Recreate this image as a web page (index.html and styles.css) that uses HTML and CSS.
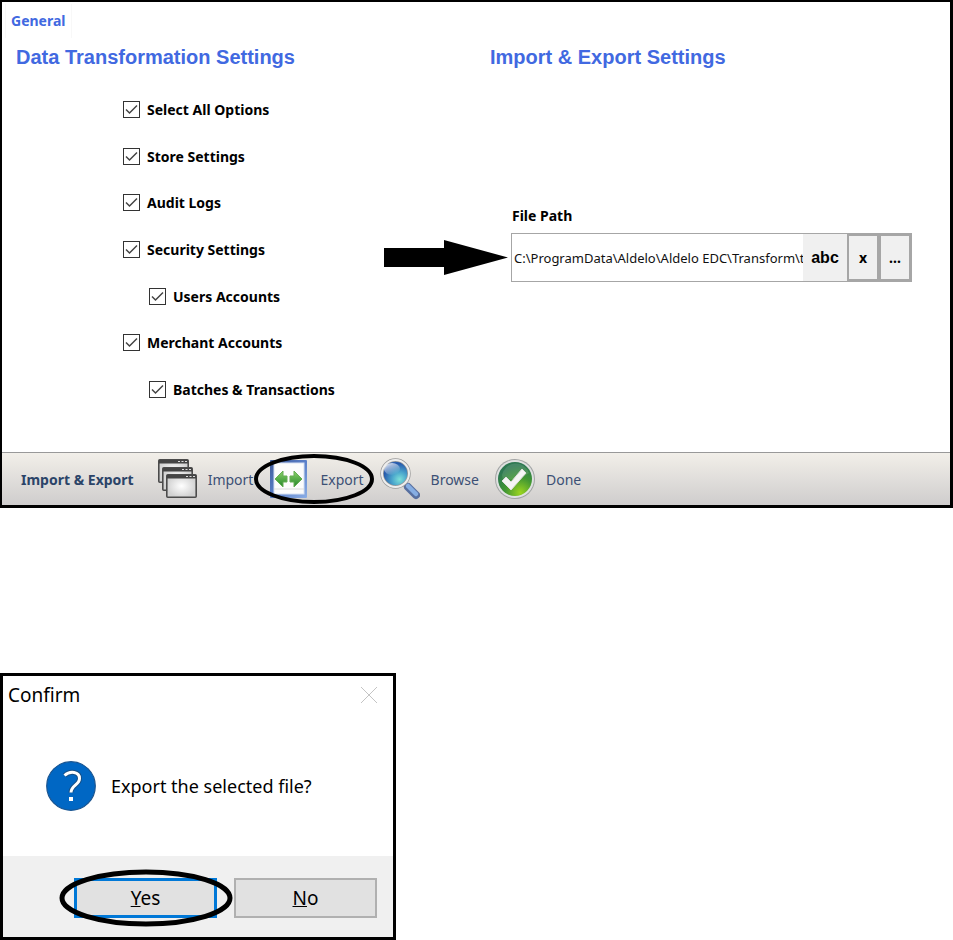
FILE: index.html
```html
<!DOCTYPE html>
<html lang="en">
<head>
<meta charset="utf-8">
<title>Import &amp; Export</title>
<link rel="stylesheet" href="styles.css">
</head>
<body>
<main class="window">
  <nav class="tabs"><a class="tab" href="#general">General</a></nav>
  <div class="panels" id="general">
    <section class="panel">
      <h2 class="heading">Data Transformation Settings</h2>
      <div class="options">
        <label class="option"><input type="checkbox" checked>Select All Options</label>
        <label class="option"><input type="checkbox" checked>Store Settings</label>
        <label class="option"><input type="checkbox" checked>Audit Logs</label>
        <label class="option"><input type="checkbox" checked>Security Settings</label>
        <label class="option nested"><input type="checkbox" checked>Users Accounts</label>
        <label class="option"><input type="checkbox" checked>Merchant Accounts</label>
        <label class="option nested"><input type="checkbox" checked>Batches &amp; Transactions</label>
      </div>
    </section>
    <section class="panel">
      <h2 class="heading">Import &amp; Export Settings</h2>
      <div class="path">
        <label class="path-label" for="file-path">File Path</label>
        <div class="path-box">
          <input class="path-input" id="file-path" type="text" value="C:\ProgramData\Aldelo\Aldelo EDC\Transform\template.xml">
          <button class="path-button keyboard" type="button">abc</button>
          <button class="path-button framed" type="button">x</button>
          <button class="path-button framed" type="button">...</button>
          <svg class="arrow" viewBox="0 0 124 36" aria-hidden="true"><path d="M0 8H60V0L124 17.500L60 35V27H0Z"/></svg>
        </div>
      </div>
    </section>
  </div>
  <footer class="toolbar">
    <strong class="toolbar-title">Import &amp; Export</strong>
    <button class="tool" type="button">
      <svg class="tool-icon" viewBox="0 0 40 42" aria-hidden="true">
        <defs>
          <radialGradient id="pane"><stop offset="0" stop-color="#fff"/><stop offset="1" stop-color="#d2d2d2"/></radialGradient>
          <g id="win"><rect x=".8" y=".8" width="29.400" height="22.400" rx="1" fill="url(#pane)" stroke="#4b4b4b" stroke-width="1.600"/><path d="M1 1H30V4.500H1Z" fill="#444"/><path d="M20 2.500h2m1.500 0h2m1.500 0h2" stroke="#ddd" stroke-width="1.200"/></g>
        </defs>
        <use href="#win" x="1" y="1"/><use href="#win" x="5" y="9"/><use href="#win" x="9" y="16"/>
      </svg>
      <span>Import</span>
    </button>
    <button class="tool circled" type="button">
      <svg class="tool-icon" viewBox="0 0 40 42" aria-hidden="true">
        <defs>
          <linearGradient id="frame" x2="1" y2="1"><stop offset="0" stop-color="#3d5998"/><stop offset=".5" stop-color="#5b80c9"/><stop offset="1" stop-color="#8caee5"/></linearGradient>
          <linearGradient id="leaf" x2="0" y2="1"><stop offset="0" stop-color="#8bd269"/><stop offset="1" stop-color="#24852a"/></linearGradient>
        </defs>
        <rect x="1" y="2" width="37" height="38" rx="1" fill="url(#frame)"/>
        <rect x="5" y="5" width="30" height="31" fill="#fcfcfc" stroke="#d6e0f2"/>
        <path d="M5 31H35" stroke="#dcdcdc"/>
        <path d="M6 21L14 13V18H18V24H14V29ZM33 21L25 13V18H21V24H25V29Z" fill="url(#leaf)" stroke="#64ad52"/>
      </svg>
      <span>Export</span>
      <svg class="ring ring-tool" viewBox="0 0 120 50" preserveAspectRatio="none" aria-hidden="true"><ellipse cx="60" cy="25" rx="58" ry="23"/></svg>
    </button>
    <button class="tool" type="button">
      <svg class="tool-icon" viewBox="0 0 40 42" aria-hidden="true">
        <defs>
          <radialGradient id="lens" cx=".65" cy=".72" r=".8"><stop offset="0" stop-color="#7ce0d8"/><stop offset=".35" stop-color="#4aa5cc"/><stop offset=".75" stop-color="#2659ac"/><stop offset="1" stop-color="#4377c0"/></radialGradient>
          <linearGradient id="shine" x2=".6" y2="1"><stop offset="0" stop-color="#fff" stop-opacity=".9"/><stop offset="1" stop-color="#fff" stop-opacity="0"/></linearGradient>
        </defs>
        <path d="M22 24L27 29" stroke="#999" stroke-width="4"/>
        <path d="M28 29L36 37" stroke="#576f9f" stroke-width="8" stroke-linecap="round"/>
        <path d="M28 28L36 36" stroke="#86aee3" stroke-width="4.500" stroke-linecap="round"/>
        <circle cx="15.500" cy="15.500" r="13.500" fill="url(#lens)" stroke="#999" stroke-width="3.400"/>
        <circle cx="15.500" cy="15.500" r="13.500" fill="none" stroke="#eee" stroke-width="2"/>
        <ellipse cx="12" cy="11" rx="8" ry="6" fill="url(#shine)"/>
      </svg>
      <span>Browse</span>
    </button>
    <button class="tool" type="button">
      <svg class="tool-icon" viewBox="0 0 40 42" aria-hidden="true">
        <defs>
          <radialGradient id="green" cx=".65" cy=".9" r=".8"><stop offset="0" stop-color="#9bd51f"/><stop offset=".55" stop-color="#419633"/><stop offset="1" stop-color="#2d7851"/></radialGradient>
        </defs>
        <circle cx="20" cy="21" r="20" fill="#a2a4a4"/>
        <circle cx="20" cy="21" r="19" fill="#dfe1e1"/>
        <circle cx="20" cy="21" r="17" fill="url(#green)"/>
        <path d="M7 17A14 14 0 0 1 34 15Q25 22 8 22Z" fill="#fff" opacity=".12"/>
        <path d="M7 23L11 19L16 24L27 11L31 15L16 32Z" fill="#f5f5f5" stroke="#ddd" stroke-linejoin="round"/>
      </svg>
      <span>Done</span>
    </button>
  </footer>
</main>

<div class="dialog" role="dialog" aria-labelledby="dialog-title">
  <header class="dialog-header">
    <span id="dialog-title">Confirm</span>
    <button class="close" type="button" aria-label="Close"><svg class="close-icon" viewBox="0 0 18 18" aria-hidden="true"><path d="M1 1L17 17M17 1L1 17"/></svg></button>
  </header>
  <div class="dialog-body">
    <svg class="question" viewBox="0 0 50 50" aria-hidden="true">
      <circle cx="25" cy="25" r="24.300" fill="#0067c4" stroke="#1b5590" stroke-width="1.200"/>
      <path d="M18.500 14.500C24 9.500 33.500 10.500 33.500 17.500C33.500 24 25 24.500 25 31.500" fill="none" stroke="#164f85" stroke-width="5"/>
      <path d="M18.500 14.500C24 9.500 33.500 10.500 33.500 17.500C33.500 24 25 24.500 25 31.500" fill="none" stroke="#fff" stroke-width="3"/>
      <rect x="23" y="36" width="4" height="4" fill="#fff"/>
    </svg>
    <p class="message">Export the selected file?</p>
  </div>
  <footer class="dialog-footer">
    <button class="answer default" type="button"><span><u>Y</u>es</span>
      <svg class="ring ring-answer" viewBox="0 0 174 58" preserveAspectRatio="none" aria-hidden="true"><ellipse cx="87" cy="29" rx="84" ry="26"/></svg>
    </button>
    <button class="answer" type="button"><span><u>N</u>o</span></button>
  </footer>
</div>
</body>
</html>
```
FILE: styles.css
```css
* {
  box-sizing: border-box;
}

body {
  margin: 0;
  background: #fff;
  color: #000;
  font-family: "Noto Sans", "Open Sans", sans-serif;
  font-size: 14px;
}

button {
  margin: 0;
  padding: 0;
  border: 0;
  background: none;
  font: inherit;
  color: inherit;
}

.window {
  border: 3px solid #000;
  border-left-width: 2px;
  border-top-width: 2px;
}

.tabs {
  display: flex;
  padding: 2px 3px 0;
}

.tab {
  padding: 0 5px;
  border: 1px solid #f8f8f8;
  border-width: 0 1px;
  color: #4169e1;
  font-weight: 700;
  line-height: 34px;
  text-decoration: none;
}

.panels {
  display: grid;
  grid-template-columns: 1fr 1fr;
  padding-bottom: 39px;
}

.heading {
  margin: 0;
  padding-left: 14px;
  color: #4169e1;
  font-family: "Liberation Sans", Arial, sans-serif;
  font-size: 20px;
  font-weight: 700;
  line-height: 38px;
}

.options {
  display: grid;
  grid-auto-rows: 1fr;
  height: 327px;
  margin-top: 10px;
  padding-left: 121px;
}

.option {
  display: flex;
  align-items: center;
  justify-self: start;
  gap: 7px;
  font-weight: 700;
}

.nested {
  margin-left: 26px;
}

.option input {
  appearance: none;
  width: 17px;
  height: 17px;
  margin: 0;
  border: 1px solid #333;
  background: #fff;
}

.option input:checked {
  background: #fff url("data:image/svg+xml,%3Csvg xmlns='http://www.w3.org/2000/svg' viewBox='0 0 15 15'%3E%3Cpath d='M2 7.500L5.500 11L13 3.500' fill='none' stroke='%23444' stroke-width='1.500'/%3E%3C/svg%3E") center / 15px 15px no-repeat;
}

.path {
  margin: 128px 38px 0 35px;
}

.path-label {
  display: block;
  padding-left: 1px;
  font-weight: 700;
  line-height: 24px;
}

.path-box {
  position: relative;
  display: flex;
  height: 49px;
  margin-top: 5px;
  border: 1px solid #a6a6a6;
}

.path-input {
  flex: 1;
  min-width: 0;
  padding: 0 0 0 2px;
  border: 0;
  outline: 0;
  background: #fff;
  color: #111;
  font-family: "Noto Sans", "Open Sans", sans-serif;
  font-size: 13px;
}

.path-button {
  width: 32px;
  background: #f0f0f0;
  font-weight: 700;
}

.keyboard {
  width: 44px;
  font-family: "Liberation Sans", Arial, sans-serif;
  font-size: 16px;
}

.framed {
  border: 2px solid #a6a6a6;
}

.arrow {
  position: absolute;
  right: 100%;
  top: 6px;
  width: 124px;
  height: 36px;
  margin-right: 4px;
}

.toolbar {
  display: flex;
  align-items: center;
  gap: 16px;
  height: 53px;
  padding-left: 19px;
  border-top: 1px solid #999;
  background: linear-gradient(#f2efe9, #cfcdcd);
  color: #3c5075;
}

.toolbar-title {
  margin-right: 7px;
  color: #2b4468;
}

.tool {
  position: relative;
  display: flex;
  align-items: center;
  gap: 11px;
}

.tool-icon {
  width: 40px;
  height: 42px;
}

.ring {
  position: absolute;
  fill: none;
  stroke: #000;
  stroke-width: 4px;
}

.ring-tool {
  left: -15px;
  top: -4px;
  width: 120px;
  height: 50px;
}

.dialog {
  width: 396px;
  margin-top: 165px;
  border: 3px solid #000;
  background: #fff;
  font-size: 19px;
}

.dialog-header {
  display: flex;
  align-items: center;
  justify-content: space-between;
  height: 37px;
  padding: 0 15px 0 5px;
}

.close {
  display: flex;
}

.close-icon {
  width: 18px;
  height: 18px;
  fill: none;
  stroke: #c4c4c4;
}

.dialog-body {
  display: flex;
  align-items: center;
  gap: 15px;
  height: 143px;
  padding: 3px 0 0 43px;
}

.question {
  width: 50px;
  height: 50px;
}

.message {
  margin: 0;
  font-size: 18px;
}

.dialog-footer {
  display: flex;
  justify-content: flex-end;
  align-items: center;
  gap: 17px;
  height: 81px;
  padding: 2px 16px 0 0;
  background: #f0f0f0;
}

.answer {
  position: relative;
  width: 143px;
  height: 40px;
  border: 2px solid #b0b0b0;
  background: #e1e1e1;
}

.default {
  border: 3px solid #0078d7;
}

.ring-answer {
  left: -18px;
  top: -12px;
  width: 174px;
  height: 58px;
  stroke-width: 5px;
}
```
